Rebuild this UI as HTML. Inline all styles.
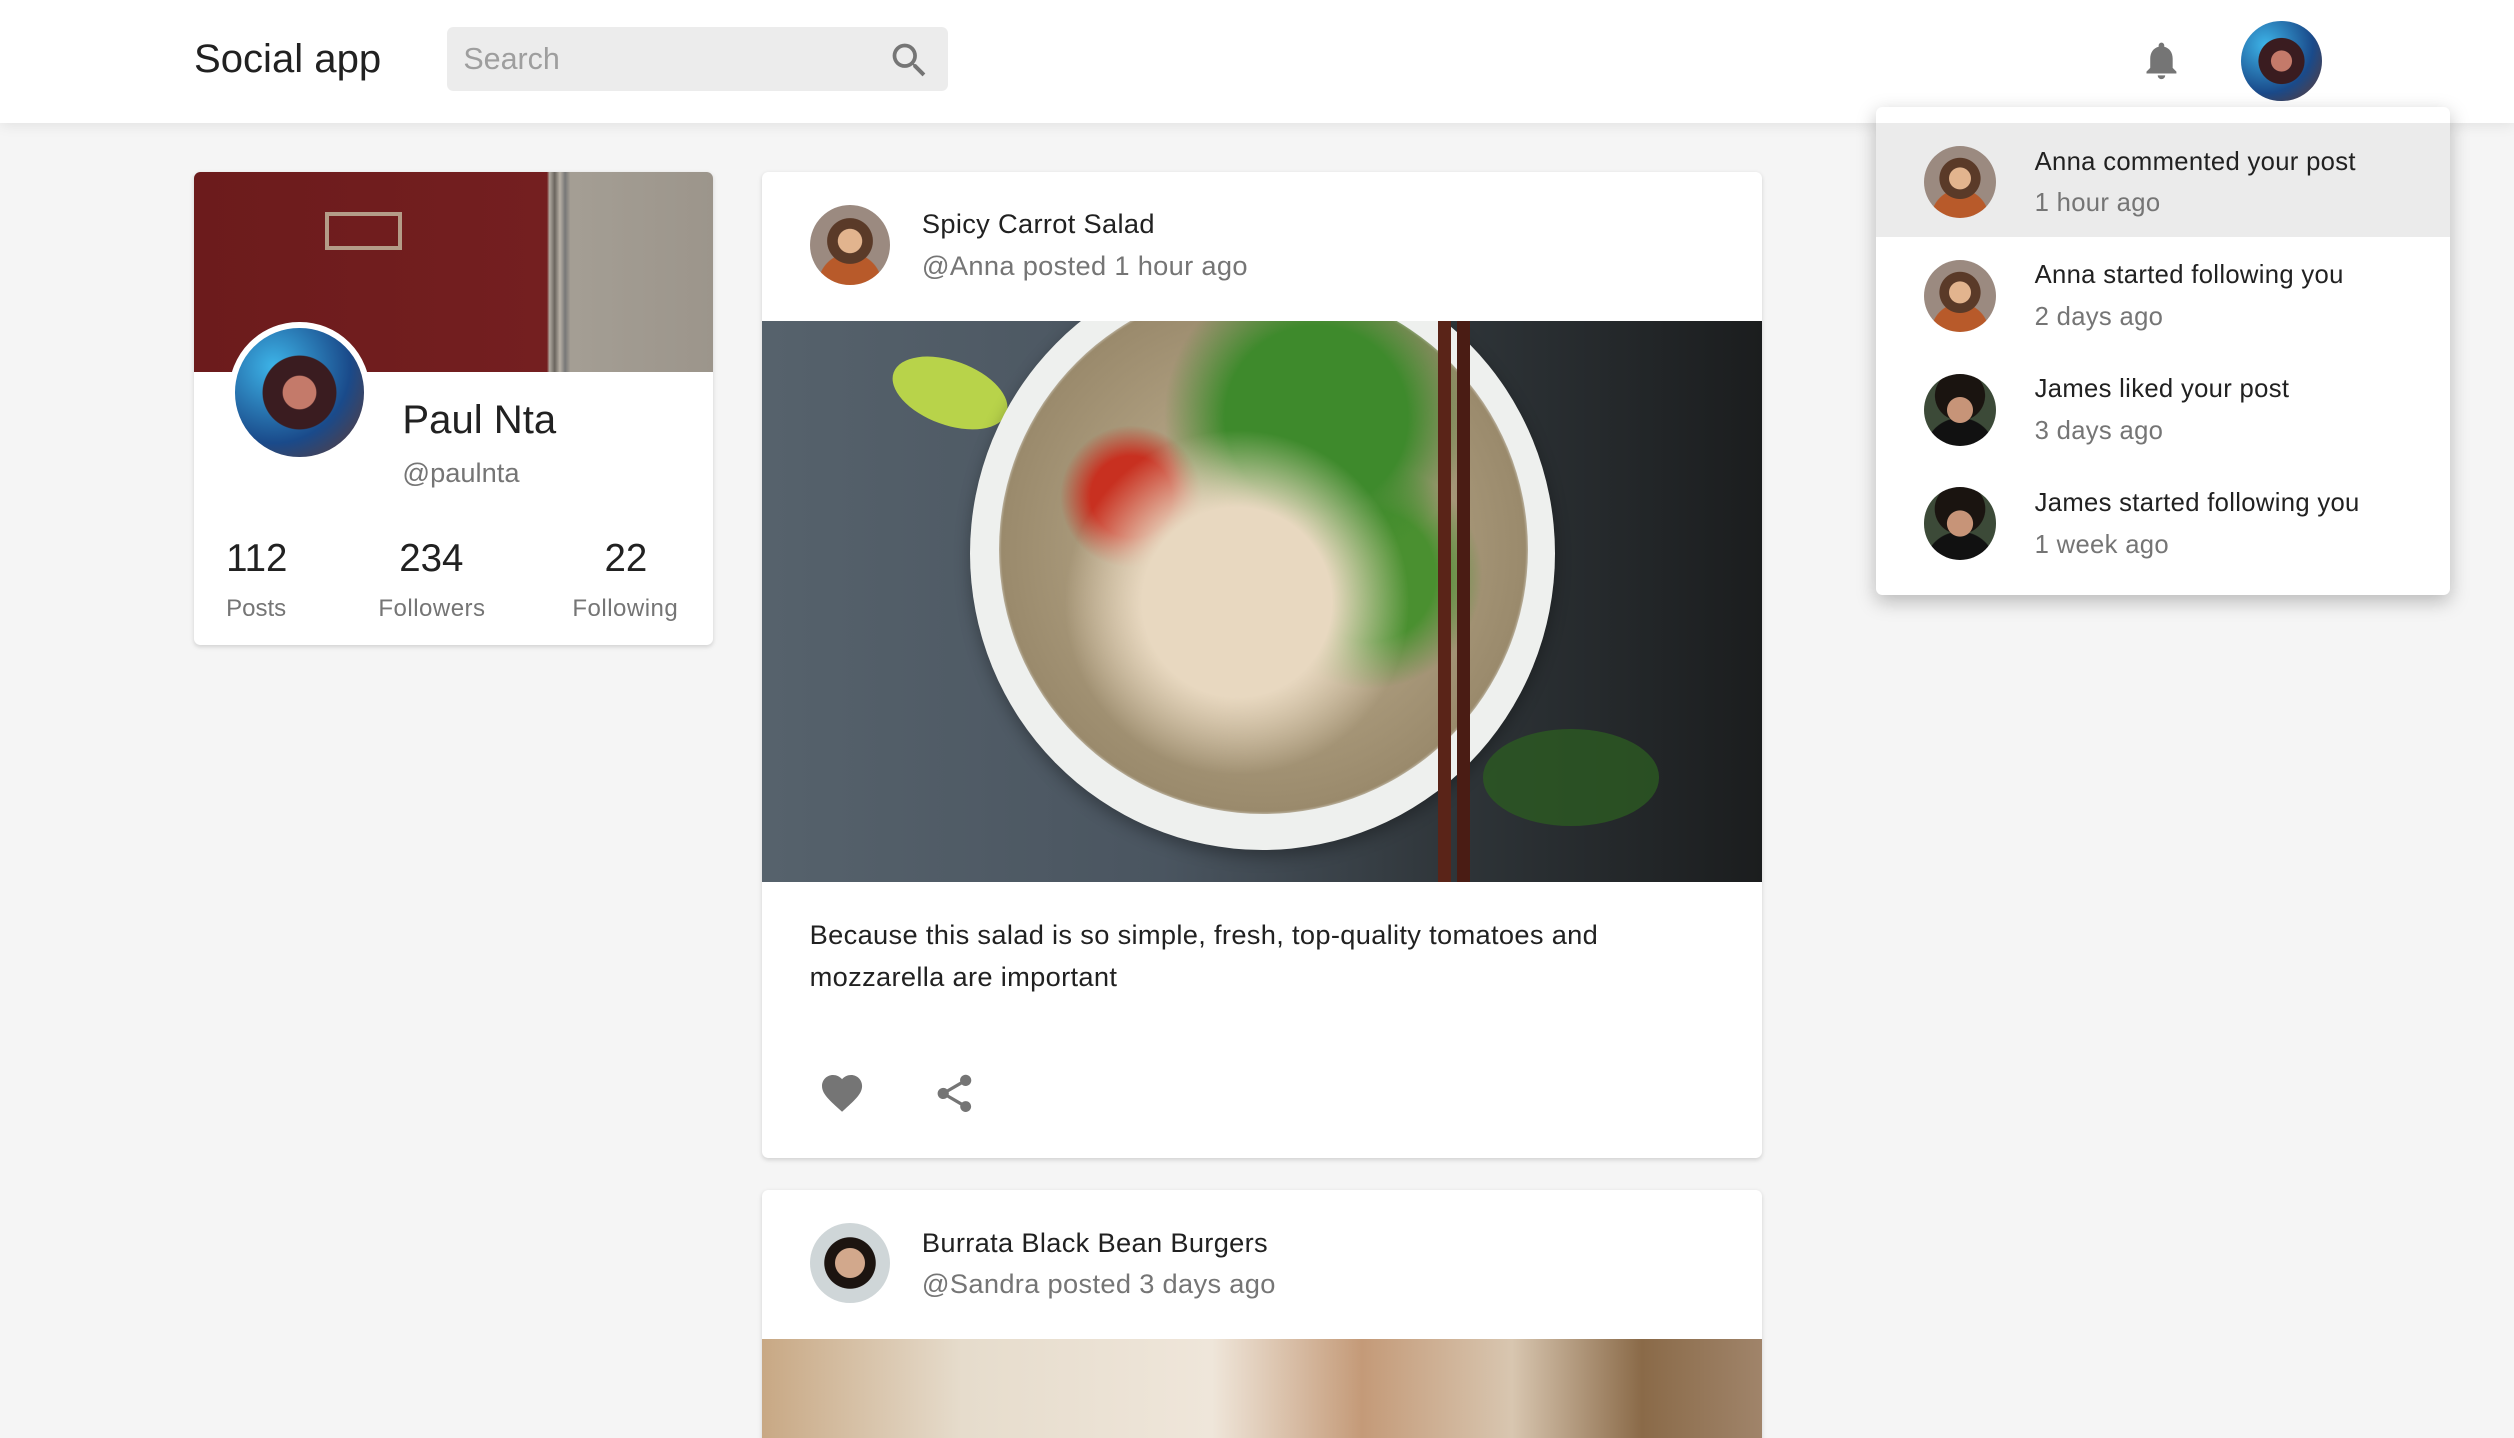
<!DOCTYPE html>
<html><head><meta charset="utf-8"><style>
html,body{margin:0;padding:0;overflow:hidden;background:#f5f5f5;width:2514px;height:1438px}
#w{position:relative;width:1568px;height:897px;zoom:1.60332;background:#f5f5f5;font-family:"Liberation Sans",sans-serif;color:#212121;overflow:hidden}
.abs{position:absolute}
.hdr{left:0;top:0;width:1568px;height:77px;background:#fff;box-shadow:0 2px 8px rgba(0,0,0,.08)}
.card{background:#fff;border-radius:4px;box-shadow:0 1px 3px rgba(0,0,0,.15);overflow:hidden}
.av{border-radius:50%;overflow:hidden}
.anna{background:radial-gradient(circle at 50% 45%,#e2b48e 0 20%,#5a3a28 21% 38%,transparent 39%),radial-gradient(circle at 50% 100%,#b85a2a 0 35%,transparent 36%),#9b8a80}
.james{background:radial-gradient(circle at 50% 50%,#c79478 0 25%,transparent 26%),radial-gradient(circle at 50% 30%,#1a1410 0 40%,transparent 41%),radial-gradient(circle at 50% 110%,#111 0 40%,transparent 41%),#3c4a38}
.me{background:radial-gradient(circle at 50% 50%,#c47a6a 0 18%,#3a1c20 19% 40%,transparent 41%),radial-gradient(circle at 30% 30%,#3db4e8,#1a4a8a 60%,#6a3a2a)}
.sandra{background:radial-gradient(circle at 50% 50%,#d2a88c 0 26%,#1c1410 27% 45%,transparent 46%),#cfd6d8}
.nt{font-size:16px;color:#212121;letter-spacing:.2px}
.ns{font-size:16px;color:#757575;letter-spacing:.2px}
</style></head><body><div id="w">
<div class="abs hdr"></div>
<div class="abs" style="left:121px;top:23px;font-size:25px;color:#212121">Social app</div>
<div class="abs" style="left:279px;top:17px;width:312px;height:40px;background:#ececec;border-radius:4px"></div>
<div class="abs" style="left:289px;top:26px;font-size:19px;color:#9e9e9e">Search</div>
<svg class="abs" style="left:553px;top:24px" width="28" height="28" viewBox="0 0 24 24"><path fill="#757575" d="M15.5 14h-.79l-.28-.27A6.471 6.471 0 0 0 16 9.5 6.5 6.5 0 1 0 9.5 16c1.61 0 3.09-.59 4.230-1.57l.27.28v.79l5 4.99L20.49 19l-4.99-5zm-6 0C7.01 14 5 11.990 5 9.5S7.01 5 9.5 5 14 7.01 14 9.5 11.99 14 9.5 14z"/></svg>
<svg class="abs" style="left:1334px;top:24px" width="28" height="28" viewBox="0 0 24 24"><path fill="#757575" d="M12 22c1.1 0 2-.9 2-2h-4c0 1.1.89 2 2 2zm6-6v-5c0-3.07-1.64-5.64-4.5-6.32V4c0-.83-.67-1.5-1.5-1.5s-1.5.67-1.5 1.5v.68C7.63 5.36 6 7.92 6 11v5l-2 2v1h16v-1l-2-2z"/></svg>
<div class="abs av me" style="left:1398px;top:13px;width:50px;height:50px"></div>

<div class="abs card" style="left:121px;top:107px;width:324px;height:295px">
 <div class="abs" style="left:0;top:0;width:324px;height:125px;background:linear-gradient(90deg,#6c1b1c 0,#741f20 68%,#b0aaa0 68.5%,#6a655e 69.5%,#b8b1a6 70.5%,#777 71.5%,#a49e94 72.5%,#9c958b 100%)"></div>
 <div class="abs" style="left:82px;top:25px;width:48px;height:24px;border:3px solid #b49c88;box-sizing:border-box"></div>
 <div class="abs av me" style="left:22px;top:94px;width:80px;height:80px;border:4px solid #fff"></div>
 <div class="abs" style="left:130px;top:141px;font-size:25px">Paul Nta</div>
 <div class="abs" style="left:130px;top:178px;font-size:17px;color:#757575">@paulnta</div>
 <div class="abs" style="left:20px;top:228px;font-size:24px">112</div>
 <div class="abs" style="left:20px;top:264px;font-size:15px;color:#757575">Posts</div>
 <div class="abs" style="left:128px;top:228px;font-size:24px">234</div>
 <div class="abs" style="left:115px;top:264px;font-size:15px;color:#757575;letter-spacing:.3px">Followers</div>
 <div class="abs" style="left:256px;top:228px;font-size:24px">22</div>
 <div class="abs" style="left:236px;top:264px;font-size:15px;color:#757575;letter-spacing:.3px">Following</div>
</div>

<div class="abs card" style="left:475px;top:107px;width:624px;height:615px">
 <div class="abs av anna" style="left:30px;top:21px;width:50px;height:50px"></div>
 <div class="abs" style="left:100px;top:23px;font-size:17px;letter-spacing:.2px">Spicy Carrot Salad</div>
 <div class="abs" style="left:100px;top:49px;font-size:17px;color:#757575;letter-spacing:.2px">@Anna posted 1 hour ago</div>
 <div class="abs" style="left:0;top:93px;width:624px;height:350px;overflow:hidden;background:linear-gradient(90deg,#56626c 0,#4a5560 40%,#2e3438 70%,#1b1d1e 100%)">
  <div class="abs" style="left:80px;top:25px;width:75px;height:40px;border-radius:50%;background:#b8d34a;transform:rotate(20deg)"></div>
  <div class="abs" style="left:130px;top:-40px;width:365px;height:370px;border-radius:50%;background:#eef0ee;box-shadow:0 4px 10px rgba(0,0,0,.3)"></div>
  <div class="abs" style="left:148px;top:-22px;width:330px;height:330px;border-radius:50%;background:radial-gradient(circle at 45% 60%,#e8d8c0 0 22%,transparent 40%),radial-gradient(circle at 60% 25%,#3e8a2c 0 18%,transparent 30%),radial-gradient(circle at 25% 40%,#c83020 0 8%,transparent 14%),radial-gradient(circle at 70% 55%,#4a9030 0 14%,transparent 24%),radial-gradient(circle at 50% 50%,#c8b898,#9a8a6c 70%,#eef0ee 72%)"></div>
  <div class="abs" style="left:422px;top:0;width:8px;height:350px;background:#5a2418"></div>
  <div class="abs" style="left:434px;top:0;width:8px;height:350px;background:#4a1c14"></div>
  <div class="abs" style="left:450px;top:255px;width:110px;height:60px;border-radius:50%;background:#2c5a22;opacity:.8"></div>
 </div>
 <div class="abs" style="left:30px;top:463px;font-size:17px;line-height:26px;width:580px;letter-spacing:.2px">Because this salad is so simple, fresh, top-quality tomatoes and mozzarella are important</div>
 <svg class="abs" style="left:35px;top:560px" width="30" height="30" viewBox="0 0 24 24"><path fill="#757575" d="M12 21.35l-1.45-1.32C5.4 15.36 2 12.28 2 8.5 2 5.42 4.42 3 7.5 3c1.74 0 3.41.81 4.5 2.09C13.09 3.81 14.76 3 16.5 3 19.58 3 22 5.42 22 8.5c0 3.78-3.4 6.86-8.55 11.54L12 21.35z"/></svg>
 <svg class="abs" style="left:106px;top:561px" width="28" height="28" viewBox="0 0 24 24"><path fill="#757575" d="M18 16.08c-.76 0-1.44.3-1.96.77L8.91 12.7c.05-.23.09-.46.09-.7s-.04-.47-.09-.7l7.05-4.11c.54.5 1.25.81 2.04.81 1.66 0 3-1.34 3-3s-1.34-3-3-3-3 1.34-3 3c0 .24.04.47.09.7L8.04 9.81C7.5 9.31 6.79 9 6 9c-1.66 0-3 1.34-3 3s1.34 3 3 3c.79 0 1.5-.31 2.04-.81l7.12 4.16c-.05.21-.08.43-.08.65 0 1.61 1.31 2.92 2.92 2.92 1.61 0 2.92-1.31 2.92-2.92s-1.31-2.92-2.92-2.92z"/></svg>
</div>

<div class="abs card" style="left:475px;top:742px;width:624px;height:200px">
 <div class="abs av sandra" style="left:30px;top:21px;width:50px;height:50px"></div>
 <div class="abs" style="left:100px;top:23px;font-size:17px;letter-spacing:.2px">Burrata Black Bean Burgers</div>
 <div class="abs" style="left:100px;top:49px;font-size:17px;color:#757575;letter-spacing:.2px">@Sandra posted 3 days ago</div>
 <div class="abs" style="left:0;top:93px;width:624px;height:110px;background:linear-gradient(90deg,#c8a884 0,#e6dccc 20%,#efe6da 45%,#c49a78 60%,#d8c6b0 75%,#8a6a48 88%,#a0846a 100%)"></div>
</div>

<div class="abs card" style="left:1170px;top:67px;width:358px;height:304px;box-shadow:0 4px 12px rgba(0,0,0,.25)">
 <div class="abs" style="left:0;top:10px;width:358px;height:71px;background:#ebebeb"></div>
 <div class="abs av anna" style="left:30px;top:24px;width:45px;height:45px"></div>
 <div class="abs nt" style="left:99px;top:25px">Anna commented your post</div>
 <div class="abs ns" style="left:99px;top:51px">1 hour ago</div>
 <div class="abs av anna" style="left:30px;top:95px;width:45px;height:45px"></div>
 <div class="abs nt" style="left:99px;top:96px">Anna started following you</div>
 <div class="abs ns" style="left:99px;top:122px">2 days ago</div>
 <div class="abs av james" style="left:30px;top:166px;width:45px;height:45px"></div>
 <div class="abs nt" style="left:99px;top:167px">James liked your post</div>
 <div class="abs ns" style="left:99px;top:193px">3 days ago</div>
 <div class="abs av james" style="left:30px;top:237px;width:45px;height:45px"></div>
 <div class="abs nt" style="left:99px;top:238px">James started following you</div>
 <div class="abs ns" style="left:99px;top:264px">1 week ago</div>
</div>
</div></body></html>
